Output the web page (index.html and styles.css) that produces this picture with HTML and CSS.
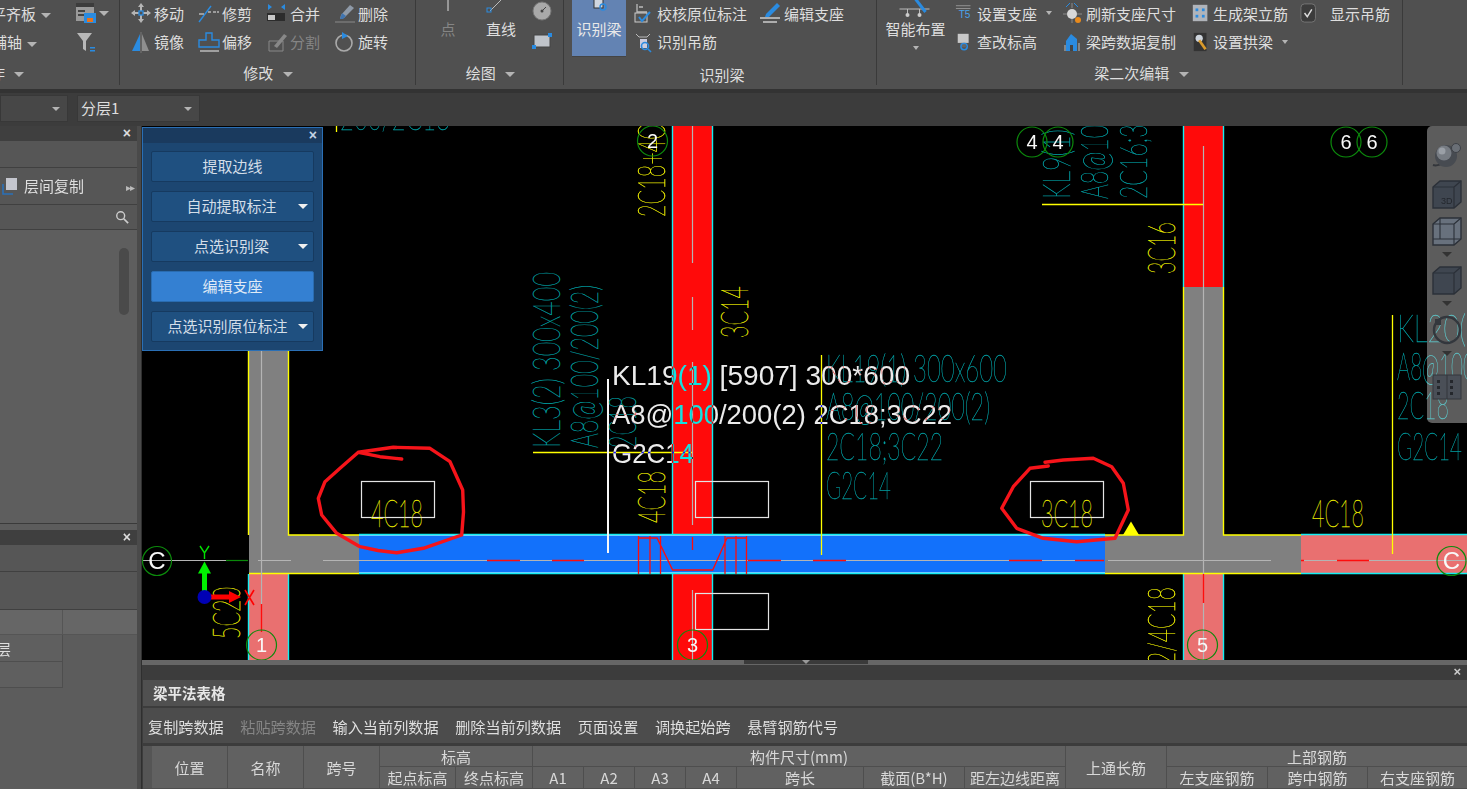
FILE: index.html
```html
<!DOCTYPE html>
<html lang="zh-CN">
<head>
<meta charset="utf-8">
<title>梁平法表格</title>
<link rel="stylesheet" href="styles.css">
</head>
<body>
<div class="app">

<header class="ribbon">
  <section class="group g1">
    <div class="content g1-grid">
      <div class="cut-a">平齐板 <i class="caret"></i></div>
      <div class="tool-icons"><svg class="ico" viewBox="0 0 22 22"><rect x="1" y="1" width="18" height="18" fill="#9a9a9a"/><rect x="1" y="1" width="18" height="4" fill="#3c3c3c"/><rect x="3" y="8" width="7" height="2" fill="#444"/><rect x="3" y="12" width="7" height="2" fill="#444"/><rect x="9" y="11" width="12" height="10" fill="#2a8be0"/><rect x="12" y="16" width="6" height="4" fill="#e8731c"/></svg><i class="caret"></i></div>
      <div class="cut-b">辅轴 <i class="caret"></i></div>
      <div class="tool-icons"><svg class="ico" viewBox="0 0 22 22"><path d="M2 2h15l-6 8v10l-3-2v-8z" fill="#b8b8b8"/><rect x="15" y="16" width="5" height="1.5" fill="#2a8be0"/><rect x="15" y="19" width="5" height="1.5" fill="#2a8be0"/></svg></div>
    </div>
    <div class="label cut-c">作 <i class="caret"></i></div>
  </section>

  <section class="group g2">
    <div class="content g2-grid">
      <div class="tool"><svg class="ico" viewBox="0 0 22 22"><path d="M11 1l3 4h-2v4h-2V5H8zM11 21l-3-4h2v-4h2v4h2zM1 11l4-3v2h4v2H5v2zM21 11l-4 3v-2h-4v-2h4V8z" fill="#b5b5b5"/><rect x="9" y="9" width="4" height="4" fill="none" stroke="#2a8be0" stroke-width="1.3"/></svg><span>移动</span></div>
      <div class="tool"><svg class="ico" viewBox="0 0 22 22"><path d="M1 20L13 4" stroke="#2a8be0" stroke-width="1.4"/><path d="M1 12h5M10 10h3M15 10h3M19 10h2" stroke="#b5b5b5" stroke-width="1.4"/></svg><span>修剪</span></div>
      <div class="tool"><svg class="ico" viewBox="0 0 22 22"><path d="M2 2l4 3-4 3zM15 5l4-3v6z" fill="#2a8be0"/><rect x="1" y="11" width="18" height="8" fill="#2c2c2c"/><rect x="2" y="13" width="7" height="5" fill="#c8c8c8"/></svg><span>合并</span></div>
      <div class="tool"><svg class="ico" viewBox="0 0 22 22"><path d="M7 13L16 3l4 3-10 10-4 1z" fill="#8f9aa8"/><path d="M6 17l2-6 4 3-3 3z" fill="#3f74b0"/><path d="M1 20h20" stroke="#8a8a8a"/></svg><span>删除</span></div>
      <div class="tool"><svg class="ico" viewBox="0 0 22 22"><path d="M10 3v17H2z" fill="#2a8be0"/><path d="M11 1v21" stroke="#777"/><path d="M12 3v17h7z" fill="#8f8f8f"/></svg><span>镜像</span></div>
      <div class="tool"><svg class="ico" viewBox="0 0 22 22"><path d="M8 2h6v7h7v7H1V9h7z" fill="none" stroke="#2a8be0" stroke-width="1.4"/><path d="M2 20h19" stroke="#bbb" stroke-width="1.5"/></svg><span>偏移</span></div>
      <div class="tool dim"><svg class="ico" viewBox="0 0 22 22"><path d="M3 10h14v10H3z" fill="none" stroke="#888"/><path d="M8 15L18 3l3 2-10 12z" fill="#888"/></svg><span>分割</span></div>
      <div class="tool"><svg class="ico" viewBox="0 0 22 22"><circle cx="10" cy="12" r="8" fill="none" stroke="#aaa" stroke-width="1.6"/><path d="M8 1l6 4-6 3z" fill="#2a8be0"/></svg><span>旋转</span></div>
    </div>
    <div class="label g2-label">修改 <i class="caret"></i></div>
  </section>

  <section class="group g3">
    <div class="content g3-row">
      <div class="vtool point"><svg class="vico" viewBox="0 0 22 20"><path d="M11 0v12" stroke="#ddd"/></svg><span class="dim">点</span></div>
      <div class="vtool line"><svg class="vico" viewBox="0 0 30 20"><path d="M4 12L16 0" stroke="#bbb"/><rect x="1" y="9" width="4" height="4" fill="none" stroke="#2a8be0"/></svg><span>直线</span></div>
      <div class="mini">
        <svg class="ico" viewBox="0 0 22 22"><circle cx="11" cy="11" r="9" fill="#a9a9a9" stroke="#777"/><path d="M11 11l4-4" stroke="#444"/><circle cx="11" cy="11" r="1.5" fill="#444"/></svg>
        <svg class="ico" viewBox="0 0 22 22"><rect x="3" y="5" width="16" height="12" fill="#c0c4ca" stroke="#444"/><rect x="1" y="15" width="4" height="4" fill="#2a8be0"/><rect x="17" y="3" width="4" height="4" fill="#2a8be0"/></svg>
      </div>
    </div>
    <div class="label g3-label">绘图 <i class="caret"></i></div>
  </section>

  <section class="group g4">
    <div class="content g4-row">
      <div class="big"><svg class="vico" viewBox="0 0 22 20"><rect x="6" y="0" width="9" height="9" fill="#cfd6e0" stroke="#333"/><circle cx="15" cy="8" r="3" fill="none" stroke="#2a8be0" stroke-width="1.4"/></svg><span>识别梁</span></div>
      <div class="g4-grid">
        <div class="tool"><svg class="ico" viewBox="0 0 22 22"><path d="M4 2v8h10M6 5h4" stroke="#bbb" stroke-width="1.3" fill="none"/><rect x="2" y="11" width="12" height="9" fill="#555" stroke="#ccc"/><path d="M6 15l3 4 8-9" stroke="#2a8be0" stroke-width="2" fill="none"/></svg><span>校核原位标注</span></div>
        <div class="tool"><svg class="ico" viewBox="0 0 22 22"><path d="M6 12L17 1l3 3L9 15H5z" fill="#2a8be0"/><path d="M0 16h20M3 20h14" stroke="#ccc" stroke-width="1.5"/></svg><span>编辑支座</span></div>
        <div class="tool"><svg class="ico" viewBox="0 0 22 22"><path d="M3 3l3 3h8l3-3" stroke="#bbb" fill="none"/><rect x="7" y="8" width="7" height="9" fill="#ccd"/><circle cx="12" cy="15" r="3.5" fill="none" stroke="#2a8be0" stroke-width="1.6"/><path d="M15 18l3 3" stroke="#2a8be0" stroke-width="1.6"/></svg><span>识别吊筋</span></div>
      </div>
    </div>
    <div class="label g4-label">识别梁</div>
  </section>

  <section class="group g5">
    <div class="content g5-row">
      <div class="vtool smart"><svg class="vico" viewBox="0 0 36 20"><path d="M2 10h30M10 10v6M22 10v6" stroke="#bbb"/><path d="M18 0l10 13" stroke="#2a8be0" stroke-width="3"/><circle cx="10" cy="16" r="2" fill="#ccc"/><circle cx="22" cy="16" r="2" fill="#ccc"/></svg><span>智能布置</span><i class="caret caret-small"></i></div>
      <div class="g5-grid">
        <div class="tool tool-narrow"><svg class="ico" viewBox="0 0 22 22"><path d="M1 3h16M1 6h16" stroke="#999"/><text class="ico-text" x="4" y="17">T5</text></svg><span>设置支座</span><i class="caret caret-small after"></i></div>
        <div class="tool"><svg class="ico" viewBox="0 0 22 22"><circle cx="10" cy="12" r="5" fill="#d8d8d8"/><path d="M10 1v5M10 17v4M1 12h4M15 12h5" stroke="#8a8a8a"/><path d="M8 1l-4 4M12 1l4 4" stroke="#2a8be0"/><circle cx="16" cy="18" r="3" fill="#e88a1c"/></svg><span>刷新支座尺寸</span></div>
        <div class="tool tool-narrow"><svg class="ico" viewBox="0 0 22 22"><rect x="2" y="2" width="16" height="18" fill="#b0b4ba"/><g fill="#2a8be0"><rect x="5" y="6" width="3" height="3"/><rect x="12" y="6" width="3" height="3"/><rect x="5" y="13" width="3" height="3"/><rect x="12" y="13" width="3" height="3"/></g></svg><span>生成架立筋</span></div>
        <div class="tool tool-narrow"><svg class="ico" viewBox="0 0 22 22"><rect x="1" y="1" width="16" height="20" rx="4" fill="#3c3c3c" stroke="#777"/><path d="M5 11l3 4 5-8" stroke="#ddd" stroke-width="1.6" fill="none"/></svg><span class="check-text">显示吊筋</span></div>
        <div class="tool tool-narrow"><svg class="ico" viewBox="0 0 22 22"><rect x="3" y="2" width="12" height="10" fill="#c8c8c8"/><rect x="6" y="12" width="6" height="5" fill="#666"/><circle cx="10" cy="16" r="3.5" fill="none" stroke="#2a8be0" stroke-width="1.6"/></svg><span>查改标高</span></div>
        <div class="tool"><svg class="ico" viewBox="0 0 22 22"><path d="M9 3l6 5v12H4V10z" fill="#2a8be0"/><path d="M3 20V14M17 20v-8" stroke="#bbb"/><rect x="8" y="14" width="3" height="6" fill="#444"/></svg><span>梁跨数据复制</span></div>
        <div class="tool tool-narrow"><svg class="ico" viewBox="0 0 22 22"><rect x="3" y="1" width="14" height="20" fill="#333"/><circle cx="9" cy="7" r="4" fill="#cdd4dc"/><path d="M9 9l7 10" stroke="#d99a2b" stroke-width="3"/></svg><span>设置拱梁</span><i class="caret caret-small after"></i></div>
      </div>
    </div>
    <div class="label g5-label">梁二次编辑 <i class="caret"></i></div>
  </section>
  <section class="group g6"></section>
</header>

<div class="toolbar">
  <div class="combo combo-a"><i class="caret"></i></div>
  <div class="combo combo-b"><span>分层1</span><i class="caret"></i></div>
</div>

<div class="main">
  <aside class="sidebar">
    <div class="dock dock-top">
      <div class="dock-title">×</div>
      <div class="side-row side-row-a"></div>
      <div class="side-row side-row-b">
        <svg class="copy-ico" viewBox="0 0 18 18"><path d="M1 7v10h10" fill="none" stroke="#2a70b8" stroke-width="1.6"/><rect x="4" y="1" width="11" height="12" fill="#c4c6ce"/></svg>
        <span>层间复制</span><b class="more">▸▸</b>
      </div>
      <div class="side-row side-search"><svg class="search" viewBox="0 0 16 16"><circle cx="6.5" cy="6.5" r="4.5" fill="none" stroke="#ccc" stroke-width="1.6"/><path d="M10 10l5 5" stroke="#ccc" stroke-width="2"/></svg></div>
      <div class="side-list"><div class="scroll"></div></div>
    </div>
    <div class="dock dock-bottom">
      <div class="dock-title">×</div>
      <div class="side-row side-row-c"></div>
      <div class="side-row side-row-d"></div>
      <div class="side-table">
        <div class="st-head"></div><div class="st-head st-empty"></div>
        <div class="st-cell"><span class="st-cut">分层</span></div><div class="st-blank"></div>
        <div class="st-cell"></div><div class="st-blank"></div>
      </div>
    </div>
  </aside>
  <div class="splitter-v"></div>

  <div class="workspace">
    <div class="canvas-wrap">
      <svg class="cad" viewBox="142 126 1325 534" width="1325" height="534">
        <rect x="142" y="126" width="1325" height="534" fill="#000"/>

        <!-- filled members -->
        <rect x="673" y="126" width="39" height="534" fill="#ff0a0a"/>
        <rect x="1184" y="126" width="39" height="161" fill="#ff0a0a"/>
        <rect x="249" y="340" width="39" height="234" fill="#808080"/>
        <rect x="249" y="535" width="110" height="39" fill="#808080"/>
        <rect x="249" y="574" width="39" height="86" fill="#e97070"/>
        <rect x="359" y="535" width="746" height="39" fill="#1271fb"/>
        <rect x="1184" y="287" width="39" height="250" fill="#808080"/>
        <rect x="1105" y="535" width="196" height="39" fill="#808080"/>
        <rect x="1301" y="535" width="166" height="39" fill="#e97070"/>
        <rect x="1184" y="574" width="39" height="86" fill="#e97070"/>

        <!-- member edges -->
        <g class="edge-cyan">
          <path d="M672.5 126V534M712.5 126V534M672.5 574V660M712.5 574V660"/>
          <path d="M1183.5 126V287M1223.5 126V287"/>
          <path d="M359 534.5H1105M359 573.5H1105"/>
          <path d="M248.5 574V660M288.5 574V660M1183.5 574V660M1223.5 574V660"/>
          <path d="M1301 534.5H1467M1301 573.5H1467"/>
        </g>
        <g class="edge-light"><path d="M359 535.5H1105M359 572.5H1105"/></g>
        <g class="edge-yellow">
          <path d="M248.5 340V535M288.5 340V535H359M249 573.5H359"/>
          <path d="M1183.5 287V535H1105M1223.5 287V535H1301M1105 573.5H1301"/>
        </g>

        <!-- axis / centre lines -->
        <g class="line-grey">
          <path d="M142 560.5H226M258 560.5H291M323 560.5H487M520 560.5H552M584 560.5H748M781 560.5H813M846 560.5H1009M1042 560.5H1075M1108 560.5H1271M1304 560.5H1337M1369 560.5H1467"/>
          <path d="M261.5 340V604M692.5 126V263M692.5 297V330M692.5 362V525M692.5 590V660"/>
          <path d="M1203.5 146V574M1203.5 603V660"/>
        </g>
        <path class="line-green" d="M226 560.5H248"/>
        <g class="line-red">
          <path d="M487 560.5H520M552 560.5H584M748 560.5H781M813 560.5H846M1009 560.5H1042M1075 560.5H1104M1301 560.5H1304M1337 560.5H1369"/>
          <path d="M261.5 604V632M1203.5 574V603M692.5 537V550"/>
          <path d="M638 538H657L672.7 570H712.7L727 538H747M638.5 536V574M650 536V574M660.5 536V574M725 536V574M736 536V574M746.5 536V574"/>
        </g>

        <!-- leader lines -->
        <g class="line-yellow">
          <path d="M1042 204.5H1203M533 452.5H692M821.5 355V555M1392.5 315V554M336.5 126V132"/>
        </g>
        <path class="line-white" d="M608 379V553"/>
        <path class="triangle" d="M1131 521.5L1139 535H1123Z"/>

        <!-- white boxes -->
        <g class="box">
          <rect x="361.5" y="481.5" width="73" height="36"/>
          <rect x="1030.5" y="481.5" width="73" height="36"/>
          <rect x="695.5" y="481.5" width="73" height="36"/>
          <rect x="695.5" y="593.5" width="73" height="36"/>
        </g>

        <!-- CAD texts, yellow -->
        <g class="cad-y">
          <text x="371" y="527" textLength="52" lengthAdjust="spacingAndGlyphs">4C18</text>
          <text x="1041" y="527" textLength="52" lengthAdjust="spacingAndGlyphs">3C18</text>
          <text x="1312" y="527" textLength="52" lengthAdjust="spacingAndGlyphs">4C18</text>
          <text transform="translate(240 639) rotate(-90)" textLength="52" lengthAdjust="spacingAndGlyphs">5C20</text>
          <text transform="translate(665 523) rotate(-90)" textLength="52" lengthAdjust="spacingAndGlyphs">4C18</text>
          <text transform="translate(748 338) rotate(-90)" textLength="52" lengthAdjust="spacingAndGlyphs">3C14</text>
          <text transform="translate(665 217) rotate(-90)" textLength="117" lengthAdjust="spacingAndGlyphs">2C18+4C18</text>
          <text transform="translate(1175 274) rotate(-90)" textLength="52" lengthAdjust="spacingAndGlyphs">3C16</text>
          <text transform="translate(1175 665) rotate(-90)" textLength="78" lengthAdjust="spacingAndGlyphs">2/4C18</text>
        </g>

        <!-- CAD texts, teal -->
        <g class="cad-t">
          <text transform="translate(560 448) rotate(-90)" textLength="176" lengthAdjust="spacingAndGlyphs">KL3(2) 300x400</text>
          <text transform="translate(598 448) rotate(-90)" textLength="163" lengthAdjust="spacingAndGlyphs">A8@100/200(2)</text>
          <text transform="translate(636 448) rotate(-90)" textLength="52" lengthAdjust="spacingAndGlyphs">2C18</text>
          <text transform="translate(1070 199) rotate(-90)" textLength="176" lengthAdjust="spacingAndGlyphs">KL9(1) 300x600</text>
          <text transform="translate(1108 199) rotate(-90)" textLength="163" lengthAdjust="spacingAndGlyphs">A8@100/200(2)</text>
          <text transform="translate(1147 199) rotate(-90)" textLength="117" lengthAdjust="spacingAndGlyphs">2C16;3C22</text>
          <text x="826" y="382" textLength="181" lengthAdjust="spacingAndGlyphs">KL19(1) 300x600</text>
          <text x="826" y="420" textLength="164" lengthAdjust="spacingAndGlyphs">A8@100/200(2)</text>
          <text x="826" y="460" textLength="117" lengthAdjust="spacingAndGlyphs">2C18;3C22</text>
          <text x="826" y="499" textLength="65" lengthAdjust="spacingAndGlyphs">G2C14</text>
          <text x="1397" y="342" textLength="92" lengthAdjust="spacingAndGlyphs">KL20(1)</text>
          <text x="1397" y="380" textLength="78" lengthAdjust="spacingAndGlyphs">A8@100</text>
          <text x="1397" y="419" textLength="52" lengthAdjust="spacingAndGlyphs">2C18</text>
          <text x="1397" y="460" textLength="65" lengthAdjust="spacingAndGlyphs">G2C14</text>
          <text x="340" y="130" textLength="110" lengthAdjust="spacingAndGlyphs">200/2C18</text>
        </g>

        <!-- hand drawn marks -->
        <g class="ink">
          <polyline points="401.7,459 380,456.7 358.3,452.3 340,468.3 325,481.7 318.3,498.3 321.7,515 336.7,533.3 360,546.7 378,550.5 396.7,552.7 423.3,548.3 461.7,535 463.5,512 462.7,490 450,461.7 430,448.3 393.3,447.3 358.3,452.3"/>
          <polyline points="1048.3,466 1030,468.3 1013.3,486.7 1001.7,508.3 1016.7,528.3 1043.3,538.3 1076.7,541.7 1115,538.3 1128.3,510 1123.3,483.3 1111.7,466.7 1093.3,458.3 1063.3,460 1045,462.3"/>
        </g>

        <!-- axis circles -->
        <g class="bubble">
          <circle cx="157" cy="561" r="14.5"/><circle cx="1451.5" cy="561" r="14.5"/>
          <circle cx="652.5" cy="141" r="15"/><circle cx="1032" cy="142" r="15"/><circle cx="1058" cy="142" r="15"/>
          <circle cx="1346" cy="142" r="15"/><circle cx="1372" cy="142" r="15"/>
          <circle cx="261.5" cy="645" r="15"/><circle cx="692.5" cy="645" r="15"/><circle cx="1202.5" cy="645" r="15"/>
        </g>
        <g class="bubble-text">
          <text class="big-c" x="157" y="569">C</text><text class="big-c" x="1451.5" y="569">C</text>
          <text x="652.5" y="148">2</text><text x="1032" y="149">4</text><text x="1058" y="149">4</text>
          <text x="1346" y="149">6</text><text x="1372" y="149">6</text>
          <text x="261.5" y="652">1</text><text x="692.5" y="652">3</text><text x="1202.5" y="652">5</text>
        </g>

        <!-- UCS -->
        <path class="ucs-g" d="M204.5 597V572"/>
        <path class="ucs-gf" d="M204.5 561.5L211 573.5H198Z"/>
        <path class="ucs-l-g" d="M200 546L204.5 553L209 546M204.5 553V559"/>
        <path class="ucs-r" d="M204 597H232"/>
        <path class="ucs-rf" d="M241 597L229 591V603Z"/>
        <path class="ucs-l-r" d="M245 590L254 605M254 590L245 605"/>
        <circle cx="204.5" cy="597" r="7" fill="#0000b4"/>

        <!-- XOR hover tip -->
        <g class="tip">
          <text x="612" y="385" textLength="298" lengthAdjust="spacingAndGlyphs">KL19(1) [5907] 300*600</text>
          <text x="612" y="424" textLength="340" lengthAdjust="spacingAndGlyphs">A8@100/200(2) 2C18;3C22</text>
          <text x="612" y="463" textLength="82" lengthAdjust="spacingAndGlyphs">G2C14</text>
        </g>
      </svg>

      <div class="float-panel">
        <div class="float-title">×</div>
        <div class="float-btn">提取边线</div>
        <div class="float-btn has-arrow"><span>自动提取标注</span><i class="caret caret-white"></i></div>
        <div class="float-btn has-arrow"><span>点选识别梁</span><i class="caret caret-white"></i></div>
        <div class="float-btn active">编辑支座</div>
        <div class="float-btn has-arrow long"><span>点选识别原位标注</span><i class="caret caret-white"></i></div>
      </div>

      <div class="viewcube">
        <svg class="vc vc-sphere" viewBox="0 0 30 30"><path d="M1 25c6 2 18-5 23-15" fill="none" stroke="#33363b" stroke-width="2"/><circle cx="14" cy="16" r="11" fill="#474b51"/><circle cx="12" cy="13" r="7.5" fill="#777c83"/><circle cx="10" cy="11" r="3.5" fill="#9a9fa6"/><circle cx="24" cy="8" r="4.5" fill="#6a6f76" stroke="#3d4046"/></svg>
        <svg class="vc" viewBox="0 0 30 30"><path d="M1 8l7-6h21v21l-7 6H1z" fill="#3f4650" stroke="#2b3038" stroke-width="1.4"/><path d="M1 8h21v21M22 8l7-6" fill="none" stroke="#2b3038" stroke-width="1.2"/><text class="vc-3d" x="9" y="25">3D</text></svg>
        <svg class="vc" viewBox="0 0 30 30"><path d="M1 8l7-6h21v21l-7 6H1z" fill="#68717d" stroke="#2b3038" stroke-width="1.4"/><path d="M1 8h21v21M22 8l7-6M8 2v21H1M8 23h21" fill="none" stroke="#2b3038" stroke-width="1.1"/></svg>
        <i class="caret caret-dark"></i>
        <svg class="vc" viewBox="0 0 30 30"><path d="M1 8l7-6h21v21l-7 6H1z" fill="#3f4650" stroke="#2b3038" stroke-width="1.4"/><path d="M1 8h21v21M22 8l7-6" fill="none" stroke="#2b3038" stroke-width="1.2"/></svg>
        <i class="caret caret-dark"></i>
        <svg class="vc vc-dial" viewBox="0 0 30 30"><circle cx="15" cy="15" r="13" fill="none" stroke="#33373d" stroke-width="2.4"/><rect x="3" y="4" width="6" height="6" fill="#33373d"/></svg>
        <i class="caret caret-dark"></i>
        <svg class="vc vc-cal" viewBox="0 0 30 26"><rect x="1" y="1" width="28" height="24" fill="#4a4f57" stroke="#33373d"/><g fill="#24272c"><rect x="5" y="6" width="3" height="3"/><rect x="5" y="12" width="3" height="3"/><rect x="5" y="18" width="3" height="3"/><rect x="18" y="6" width="3" height="3"/><rect x="18" y="12" width="3" height="3"/><rect x="18" y="18" width="3" height="3"/></g><path d="M15 1v24" stroke="#33373d"/></svg>
      </div>
    </div>

    <div class="splitter-h"><div class="thumb"><i class="caret caret-grey"></i></div></div>

    <section class="bottom">
      <div class="bottom-title"><span>×</span></div>
      <div class="bottom-name">梁平法表格</div>
      <div class="bottom-tools">
        <span>复制跨数据</span><span class="dim">粘贴跨数据</span><span>输入当前列数据</span><span>删除当前列数据</span><span>页面设置</span><span>调换起始跨</span><span>悬臂钢筋代号</span>
      </div>
      <div class="table">
        <div class="th th-lead"></div>
        <div class="th span2">位置</div>
        <div class="th span2">名称</div>
        <div class="th span2">跨号</div>
        <div class="th w2">标高</div>
        <div class="th w9">构件尺寸(mm)</div>
        <div class="th span2">上通长筋</div>
        <div class="th w3">上部钢筋</div>
        <div class="th">起点标高</div>
        <div class="th">终点标高</div>
        <div class="th">A1</div>
        <div class="th">A2</div>
        <div class="th">A3</div>
        <div class="th">A4</div>
        <div class="th">跨长</div>
        <div class="th">截面(B*H)</div>
        <div class="th">距左边线距离</div>
        <div class="th">左支座钢筋</div>
        <div class="th">跨中钢筋</div>
        <div class="th">右支座钢筋</div>
      </div>
    </section>
  </div>
</div>
</div>
</body>
</html>
```

FILE: styles.css
```css
* { box-sizing: border-box; }
html, body { margin: 0; padding: 0; height: 100%; overflow: hidden; background: #3c3c3c; }
body { font-family: "Noto Sans CJK SC", "Noto Sans", sans-serif; font-size: 15px; color: #dedede; }
.app { width: 1467px; height: 789px; display: flex; flex-direction: column; overflow: hidden; filter: blur(.3px); }
.dim { color: #858585; }

/* caret */
.caret { display: inline-block; width: 0; height: 0; border-left: 5px solid transparent; border-right: 5px solid transparent; border-top: 5px solid #b4b4b4; vertical-align: middle; }
.caret-small { border-left-width: 3.5px; border-right-width: 3.5px; border-top-width: 4px; }
.caret-white { border-top-color: #f0f0f0; border-left-width: 5px; border-right-width: 5px; border-top-width: 5px; }
.caret-dark { border-top-color: #333; border-left-width: 5px; border-right-width: 5px; position: relative; }
.caret-grey { border-top-color: #999; border-left-width: 4px; border-right-width: 4px; border-top-width: 4px; }

/* ribbon */
.ribbon { height: 93px; flex: none; display: flex; background: #505050; border-bottom: 4px solid #333; }
.group { height: 85px; border-right: 1px solid #3a3a3a; flex: none; display: flex; flex-direction: column; overflow: hidden; }
.g1 { width: 120px; }
.g2 { width: 296px; }
.g3 { width: 148px; }
.g4 { width: 313px; }
.g5 { width: 526px; }
.g6 { flex: 1; border-right: 0; }
.content { height: 58px; flex: none; margin-top: -1px; margin-bottom: 1px; }
.label { height: 27px; line-height: 29px; text-align: center; white-space: nowrap; }
.label .caret { margin-left: 6px; }

.tool { display: flex; align-items: center; gap: 2px; height: 28.5px; white-space: nowrap; }
.ico { width: 22px; height: 22px; flex: none; }
.tool-narrow .ico { width: 20px; }
.tool .after { margin-left: 7px; }
.check-text { margin-left: 8px; }
.ico-text { font: 11px "Liberation Sans", sans-serif; fill: #4aa3ec; }

.g1-grid { display: grid; grid-template-columns: 75px 44px; grid-auto-rows: 28.5px; align-items: center; }
.cut-a { margin-left: -9px; white-space: nowrap; }
.cut-b { margin-left: -8px; white-space: nowrap; }
.cut-a .caret, .cut-b .caret { margin-left: 2px; }
.tool-icons { display: flex; align-items: center; gap: 2px; }
.cut-c { text-align: left; margin-left: -10px; }

.g2-grid { display: grid; grid-template-columns: repeat(4, 68px); grid-auto-rows: 28.5px; padding-left: 10px; }
.g2-label { padding-left: 1px; }

.g3-row { display: flex; }
.vtool { display: flex; flex-direction: column; align-items: center; width: 30px; line-height: 20px; white-space: nowrap; }
.vico { width: 100%; height: 20px; flex: none; }
.point { margin-left: 17px; }
.line { margin-left: 23px; }
.mini { margin-left: 15px; display: flex; flex-direction: column; align-items: center; gap: 8px; padding-top: 1px; }
.g3-label { padding-left: 2px; }

.g4-row { display: flex; padding-left: 8px; }
.big { width: 54px; height: 58px; flex: none; background: #6383b3; border-bottom: 1px solid #444; display: flex; flex-direction: column; align-items: center; line-height: 20px; color: #e8e8e8; white-space: nowrap; }
.g4-grid { margin-left: 7px; display: grid; grid-template-columns: 127px 110px; grid-auto-rows: 28.5px; }
.g4-label { padding-top: 2px; padding-left: 4px; }

.g5-row { display: flex; padding-left: 8px; }
.smart { width: 61px; flex: none; }
.smart .caret { margin-top: 7px; }
.g5-grid { margin-left: 9px; display: grid; grid-template-columns: 107px 129px 109px 100px; grid-auto-rows: 28.5px; }
.g5-label { padding-left: 4px; }

/* toolbar */
.toolbar { height: 33px; flex: none; display: flex; gap: 9px; padding-top: 2px; background: #3c3c3c; align-items: flex-start; }
.combo { height: 27px; background: #474747; border: 1px solid #383838; display: flex; align-items: center; justify-content: space-between; padding: 0 7px 2px 3px; }
.combo .caret { border-left-width: 4px; border-right-width: 4px; border-top-width: 4px; margin-left: auto; margin-top: 2px; }
.combo-a { width: 68px; }
.combo-b { width: 123px; }

/* main */
.main { flex: 1; display: flex; min-height: 0; }
.sidebar { width: 137px; flex: none; background: #5c5c5c; display: flex; flex-direction: column; }
.splitter-v { width: 5px; flex: none; background: #4a4a4a; border-right: 1px solid #2f2f2f; }
.dock { display: flex; flex-direction: column; }
.dock-top { height: 398px; border-bottom: 1px solid #3a3a3a; margin-bottom: 6px; }
.dock-bottom { flex: 1; min-height: 0; }
.dock-title { height: 15px; flex: none; background: #3f3f3f; color: #dcdcdc; text-align: right; padding-right: 6px; font: bold 14px/14px "Liberation Sans", sans-serif; }
.side-row { background: #565656; border-bottom: 1px solid #404040; flex: none; }
.side-row-a { height: 27px; }
.side-row-b { height: 37px; display: flex; align-items: center; position: relative; padding-left: 2px; }
.copy-ico { width: 18px; height: 18px; flex: none; }
.side-row-b span { margin-left: 4px; white-space: nowrap; margin-bottom: 1px; }
.more { position: absolute; right: 3px; font-size: 10px; font-weight: normal; color: #bbb; letter-spacing: -1px; }
.side-search { height: 25px; display: flex; align-items: center; justify-content: flex-end; padding-right: 8px; }
.search { width: 14px; height: 14px; }
.side-list { flex: 1; background: #5e5e5e; padding: 18px 8px 0 0; display: flex; justify-content: flex-end; }
.scroll { width: 10px; height: 67px; border-radius: 5px; background: #4a4a4a; }
.side-row-c { height: 27px; }
.side-row-d { height: 38px; }
.side-table { flex: 1; display: grid; grid-template-columns: 63px 74px; grid-template-rows: 25px 27px 26px; background: #5c5c5c; }
.st-head { background: #666; border-right: 1px solid #555; border-bottom: 1px solid #555; }
.st-empty { border-right: 0; }
.st-cell { background: #5f5f5f; border-right: 1px solid #4e4e4e; border-bottom: 1px solid #4e4e4e; display: flex; align-items: center; justify-content: flex-end; overflow: hidden; padding-right: 51px; white-space: nowrap; }
.st-cut { flex: none; }

/* workspace */
.workspace { flex: 1; min-width: 0; display: flex; flex-direction: column; }
.canvas-wrap { position: relative; height: 534px; flex: none; overflow: hidden; background: #000; }
.cad { display: block; }

.edge-cyan path { fill: none; stroke: #14eef2; stroke-width: 1.4; }
.edge-light path { fill: none; stroke: #6ad0ff; stroke-width: 1.2; }
.edge-yellow path { fill: none; stroke: #ffff00; stroke-width: 1.4; }
.line-grey path { fill: none; stroke: #b4b4b4; stroke-width: 1.2; }
.line-green { fill: none; stroke: #0a8a0a; stroke-width: 1.2; }
.line-red path { fill: none; stroke: #ff0c0c; stroke-width: 1.3; }
.line-yellow path { fill: none; stroke: #ffff00; stroke-width: 1.3; }
.line-white { fill: none; stroke: #f8f8f8; stroke-width: 2; }
.triangle { fill: #ffff00; }
.box rect { fill: none; stroke: #e4e4e4; stroke-width: 1.2; }

.cad-y text, .cad-t text { font-family: Lato, Roboto, "Liberation Sans", sans-serif; font-weight: 100; font-size: 38px; stroke-width: .35; }
.cad-y text { fill: #f2f200; stroke: #f2f200; }
.cad-t text { fill: #00a0a4; stroke: #00a0a4; }

.ink polyline { fill: none; stroke: #f6141a; stroke-width: 3.4; stroke-linejoin: round; stroke-linecap: round; }
.bubble circle { fill: none; stroke: #0c8a0c; stroke-width: 1.2; }
.bubble-text text { font-family: "Liberation Sans", sans-serif; font-size: 20px; fill: #f8f8f8; text-anchor: middle; }
.bubble-text .big-c { font-size: 24px; }

.ucs-g { fill: none; stroke: #00f000; stroke-width: 5; }
.ucs-gf { fill: #00f000; }
.ucs-l-g { fill: none; stroke: #00e000; stroke-width: 1.4; }
.ucs-r { fill: none; stroke: #ff0000; stroke-width: 5; }
.ucs-rf { fill: #ff0000; }
.ucs-l-r { fill: none; stroke: #ff0000; stroke-width: 1.6; }

.tip text { font-family: "Liberation Sans", sans-serif; font-size: 28px; fill: #ececec; mix-blend-mode: difference; }

/* floating dialog */
.float-panel { position: absolute; left: 0; top: 1px; width: 181px; height: 224px; background: #1c4671; border: 1px solid #2a6fb5; display: flex; flex-direction: column; }
.float-title { height: 15px; flex: none; background: #1a3a5e; text-align: right; padding-right: 5px; color: #c4d4e4; font: bold 14px/14px "Liberation Sans", sans-serif; margin-bottom: 8px; }
.float-btn { height: 31px; flex: none; margin: 0 8px 9px 8px; padding-bottom: 2px; background: #1f5080; border: 1px solid #163a60; border-radius: 2px; display: flex; align-items: center; justify-content: center; color: #d4dee8; position: relative; white-space: nowrap; }
.float-btn.has-arrow { padding-right: 2px; }
.float-btn.long { padding-right: 10px; }
.float-btn.has-arrow .caret { position: absolute; right: 5px; top: 12px; }
.float-btn.active { background: #3480d2; border-color: #2a6cb0; color: #e0ebf6; }

/* view cube */
.viewcube { position: absolute; right: 0; top: 0; width: 40px; height: 297px; display: flex; flex-direction: column; align-items: center; padding-top: 14px; }
.viewcube::before { content: ""; position: absolute; inset: 0; background: #5c5c5c; border-radius: 5px 0 0 5px; mix-blend-mode: screen; }
.vc { width: 30px; height: 30px; flex: none; position: relative; }
.vc-sphere { margin-bottom: 2px; }
.vc + .vc { margin-top: 7px; }
.caret-dark { margin: 6px 0 8px; flex: none; }
.vc-dial { margin-top: 1px; }
.vc-cal { margin-top: 10px; height: 26px; }
.vc-3d { font: 9px "Liberation Sans", sans-serif; fill: #23272d; }

/* bottom panel */
.splitter-h { height: 5px; flex: none; background: #666; display: flex; padding-left: 602px; }
.thumb { width: 124px; height: 4px; background: #3a3a3a; display: flex; justify-content: center; padding-right: 0; line-height: 0; }
.bottom { flex: 1; min-height: 0; background: #3c3c3c; overflow: hidden; display: flex; flex-direction: column; padding-left: 1px; }
.bottom-title { height: 15px; flex: none; text-align: right; padding-right: 6px; font: bold 13px/13px "Liberation Sans", sans-serif; color: #ccc; }
.bottom-name { height: 26px; flex: none; background: #505050; padding-left: 10px; line-height: 26px; font-weight: bold; font-size: 14.5px; color: #e6e6e6; }
.bottom-tools { height: 35px; margin-top: 2px; flex: none; background: #4c4c4c; display: flex; gap: 16.6px; padding-left: 5px; align-items: center; white-space: nowrap; font-size: 15.15px; }
.table { margin-top: 3px; display: grid; grid-template-columns: 9px 76px 76px 76px 76px 77px 51px 51px 51px 51px 127px 101px 101px 101px 101px 100px 100px; grid-template-rows: 21px 22px; width: 1425px; background: #4b4b4b; }
.th { background: #616161; border-right: 1px solid #4e4e4e; border-bottom: 1px solid #4e4e4e; display: flex; align-items: center; justify-content: center; color: #d8d8d8; white-space: nowrap; overflow: hidden; }
.th-lead { grid-row: span 2; background: #555; border-right: 0; }
.span2 { grid-row: span 2; }
.w2 { grid-column: span 2; }
.w9 { grid-column: span 7; }
.w3 { grid-column: span 3; }
```
